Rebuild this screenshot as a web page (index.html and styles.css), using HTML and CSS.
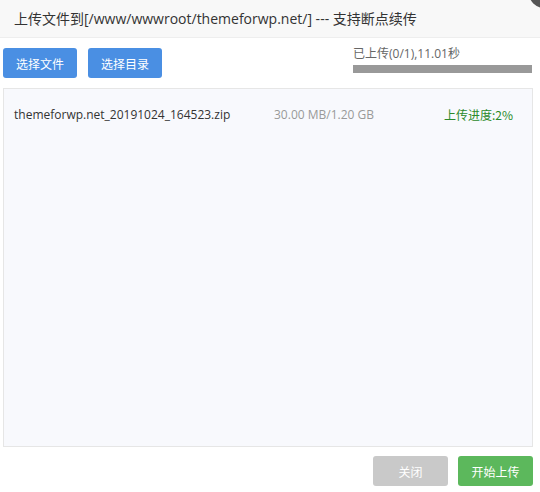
FILE: index.html
```html
<!DOCTYPE html>
<html lang="zh-CN">
<head>
    <meta charset="UTF-8">
    <title>上传文件</title>
    <link rel="stylesheet" href="styles.css">
</head>
<body>
    <div class="layer">
        <div class="layer-title">上传文件到[/www/wwwroot/themeforwp.net/] --- 支持断点续传</div>
        <span class="layer-close"></span>

        <div class="upload-body">
            <div class="toolbar">
                <button type="button" class="btn btn-blue">选择文件</button>
                <button type="button" class="btn btn-blue">选择目录</button>
                <div class="upload-status">
                    <div class="status-text">已上传(0/1),11.01秒</div>
                    <div class="status-bar"></div>
                </div>
            </div>

            <div class="file-list">
                <div class="file-row">
                    <span class="file-name">themeforwp.net_20191024_164523.zip</span>
                    <span class="file-size">30.00 MB/1.20 GB</span>
                    <span class="file-state">上传进度:2%</span>
                </div>
            </div>

            <div class="footer">
                <button type="button" class="btn btn-grey">关闭</button>
                <button type="button" class="btn btn-green">开始上传</button>
            </div>
        </div>
    </div>
</body>
</html>
```

FILE: styles.css
```css
body {
    margin: 0;
    font-family: "Open Sans", "Noto Sans CJK SC", sans-serif;
    color: #333;
    background: #fff;
}
.layer {
    position: relative;
    width: 540px;
    height: 492px;
    overflow: hidden;
}
.layer-title {
    height: 37px;
    line-height: 37px;
    padding-left: 14px;
    font-size: 14px;
    background-color: #f8f8f8;
    border-bottom: 1px solid #eee;
}
.layer-close {
    position: absolute;
    top: -22px;
    left: 529px;
    width: 30px;
    height: 30px;
    border-radius: 50%;
    background-color: #555;
}
.upload-body {
    padding: 10px 7px 0 3px;
}
.toolbar {
    display: flex;
    align-items: flex-start;
    gap: 11px;
    height: 40px;
}
.btn {
    height: 30px;
    padding: 0 12px;
    border: none;
    border-radius: 3px;
    color: #fff;
    font-family: "Noto Sans CJK SC", sans-serif;
    font-size: 12px;
    cursor: pointer;
}
.btn-blue {
    width: 74px;
    background-color: #4a8fe3;
}
.btn-grey {
    width: 75px;
    background-color: #c9c9c9;
}
.btn-green {
    width: 75px;
    background-color: #5cb85c;
}
.upload-status {
    margin-left: auto;
    width: 179px;
    margin-right: 1px;
}
.status-text {
    font-size: 12px;
    color: #666;
    line-height: 16px;
    margin-top: -2px;
}
.status-bar {
    height: 8px;
    margin-top: 3px;
    background-color: #999;
}
.file-list {
    height: 357px;
    border: 1px solid #e6e6e6;
    background-color: #f8f9fd;
}
.file-row {
    display: flex;
    align-items: center;
    height: 50px;
    padding: 0 10px;
    font-size: 12px;
}
.file-name {
    width: 260px;
    color: #333;
}
.file-size {
    width: 170px;
    color: #999;
}
.file-state {
    color: #2b8a2b;
    font-family: "Noto Sans CJK SC", sans-serif;
}
.footer {
    display: flex;
    justify-content: flex-end;
    gap: 10px;
    padding-top: 9px;
}
```
